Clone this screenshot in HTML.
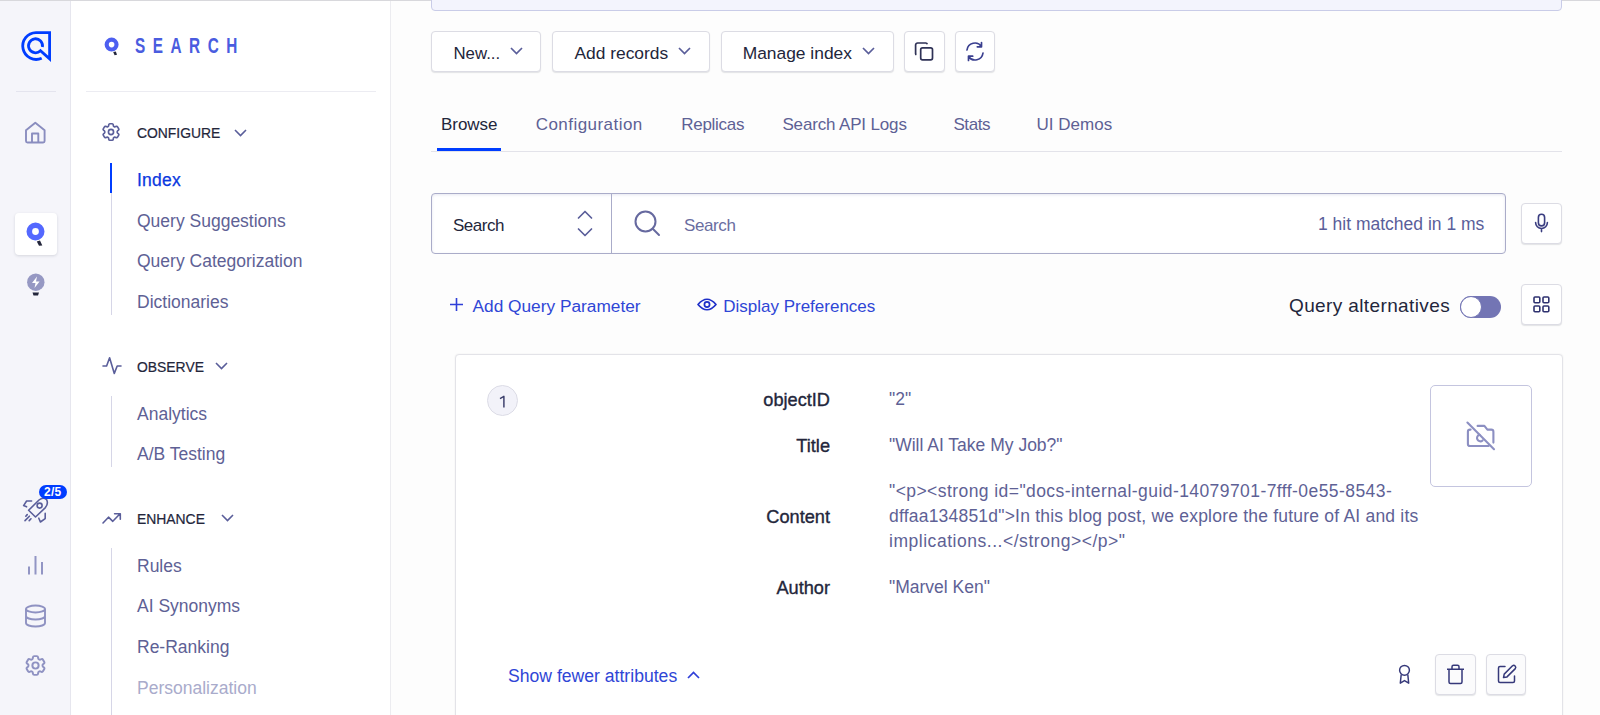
<!DOCTYPE html>
<html><head><meta charset="utf-8">
<style>
*{box-sizing:border-box;margin:0;padding:0}
html,body{width:1600px;height:715px;overflow:hidden;background:#fdfdfd;font-family:"Liberation Sans",sans-serif;color:#23263b}
.a{position:absolute}
.t{position:absolute;line-height:1;white-space:nowrap}
svg{position:absolute;overflow:visible}
#topline{left:0;top:0;width:1600px;height:1px;background:#d8d8dc}
#rail{left:0;top:1px;width:71px;height:714px;background:#f5f5fa;border-right:1px solid #e6e6ee}
#side{left:71px;top:1px;width:320px;height:714px;background:#fff;border-right:1px solid #ececf0}
.nav{font-size:17.5px;color:#5e6195;left:137px}
.hd{font-size:13.9px;color:#23263b;left:137px;-webkit-text-stroke:0.2px #23263b}
.vl{left:110.5px;width:1.5px;background:#d6d6e7}
.btn{position:absolute;background:#fff;border:1px solid #dcdce4;border-radius:4px;box-shadow:0 1px 1px rgba(35,38,59,.12)}
.tab{font-size:17px;color:#5e6195;top:115.8px}
.lbl{font-size:18.2px;color:#23263b;text-align:right;right:770px;-webkit-text-stroke:0.35px #23263b}
.val{font-size:17.5px;color:#5e6195;left:889px}
</style></head><body>
<div id="topline" class="a"></div>
<div id="rail" class="a"></div>
<div id="side" class="a"></div>

<!-- rail -->
<svg style="left:21px;top:31px" width="30" height="30" viewBox="0 0 30 30"><path d="M21.4 16.1 A7 7 0 1 0 19.45 19.75 L28.6 27.9 V1.6 H15 A13.4 13.4 0 1 0 20.7 27.2" fill="none" stroke="#003dff" stroke-width="2.8" stroke-linejoin="miter"/></svg>
<div class="a" style="left:16px;top:91px;width:40px;height:1px;background:#e4e4ee"></div>
<svg style="left:24px;top:121px" width="23" height="23" viewBox="0 0 23 23"><path d="M2 9.3 L11.3 1.8 L20.6 9.3 V20 a1.5 1.5 0 0 1 -1.5 1.5 H3.5 A1.5 1.5 0 0 1 2 20 Z M8 21.5 V12.5 H14.3 V21.5" fill="none" stroke="#8a8dbf" stroke-width="1.9" stroke-linejoin="round"/></svg>
<div class="a" style="left:15px;top:213px;width:42px;height:42px;background:#fff;border-radius:4px;box-shadow:0 1px 3px rgba(35,38,59,.15)"></div>
<svg style="left:26px;top:222px" width="20" height="25" viewBox="0 0 20 25"><circle cx="9.5" cy="9.5" r="6.2" fill="none" stroke="#5468ff" stroke-width="5.6"/><path d="M10.8 19.4 L14 18.6 L16.3 23.4 L13 23.7 Z" fill="#23263b"/></svg>
<svg style="left:26px;top:273px" width="20" height="24" viewBox="0 0 20 24"><circle cx="9.8" cy="9.2" r="8.7" fill="#9698c3"/><path d="M11 3.5 L6 10 H9.5 L8.5 15 L13.6 8.4 H10 Z" fill="#fff"/><path d="M6.5 19.5 H13 L12 22.5 H7.5 Z" fill="#23263b"/></svg>
<svg style="left:15px;top:480px" width="55" height="50" viewBox="0 0 55 50"><g fill="none" stroke="#5a5e9a" stroke-width="1.6" stroke-linecap="round" stroke-linejoin="round"><path d="M20.5 37 L13.6 30.3 L24 20 Q28 16.8 31.6 19.6 Q33.6 23.6 30.4 27.6 Z"/><circle cx="24.6" cy="25.6" r="2.5"/><path d="M16.6 21 H11.6 L8.6 25.6 L11.6 26.8"/><path d="M30.2 33.4 V38.6 L25.4 42 L23.8 38.2"/><path d="M10.8 36.2 L12.2 34.6 M10 40.6 L14.4 36.2 M14.2 40.6 L16 38.8"/></g></svg>
<div class="a" style="left:38.5px;top:484.5px;width:28.5px;height:14px;background:#003dff;border-radius:7px;color:#fff;font-size:12px;font-weight:bold;line-height:14.5px;letter-spacing:0.2px;text-align:center">2/5</div>
<svg style="left:27px;top:555px" width="17" height="20" viewBox="0 0 17 20"><path d="M2 11.6 V19.4 M8.5 1 V19.4 M15 7 V19.4" stroke="#9295c4" stroke-width="2"/></svg>
<svg style="left:24px;top:604px" width="23" height="24" viewBox="0 0 23 24"><g fill="none" stroke="#8f92c2" stroke-width="1.9"><ellipse cx="11.5" cy="5" rx="9.5" ry="3.5"/><path d="M2 5 V19 C2 21 6.2 22.5 11.5 22.5 S21 21 21 19 V5 M2 12 C2 14 6.2 15.5 11.5 15.5 S21 14 21 12"/></g></svg>
<svg style="left:23px;top:653px" width="25" height="25" viewBox="0 0 24 24"><g fill="none" stroke="#8f92c2" stroke-width="1.9" stroke-linejoin="round"><path d="M9.594 3.94c.09-.542.56-.94 1.11-.94h2.593c.55 0 1.02.398 1.11.94l.213 1.281c.063.374.313.686.645.87.074.04.147.083.22.127.325.196.72.257 1.075.124l1.217-.456a1.125 1.125 0 0 1 1.37.49l1.296 2.247a1.125 1.125 0 0 1-.26 1.431l-1.003.827c-.293.241-.438.613-.43.992a7.723 7.723 0 0 1 0 .255c-.008.378.137.75.43.991l1.004.827c.424.35.534.955.26 1.43l-1.298 2.247a1.125 1.125 0 0 1-1.369.491l-1.217-.456c-.355-.133-.75-.072-1.076.124a6.47 6.47 0 0 1-.22.128c-.331.183-.581.495-.644.869l-.213 1.281c-.09.543-.56.94-1.11.94h-2.594c-.55 0-1.019-.398-1.11-.94l-.213-1.281c-.062-.374-.312-.686-.644-.87a6.52 6.52 0 0 1-.22-.127c-.325-.196-.72-.257-1.076-.124l-1.217.456a1.125 1.125 0 0 1-1.369-.49l-1.297-2.247a1.125 1.125 0 0 1 .26-1.431l1.004-.827c.292-.24.437-.613.43-.991a6.932 6.932 0 0 1 0-.255c.007-.38-.138-.751-.43-.992l-1.004-.827a1.125 1.125 0 0 1-.26-1.43l1.297-2.247a1.125 1.125 0 0 1 1.37-.491l1.216.456c.356.133.751.072 1.076-.124.072-.044.146-.086.22-.128.332-.183.582-.495.644-.869l.214-1.28Z"/><circle cx="12" cy="12" r="3"/></g></svg>

<!-- sidebar -->
<svg style="left:104px;top:37px" width="16" height="20" viewBox="0 0 16 20"><circle cx="7.6" cy="7.6" r="4.9" fill="none" stroke="#4d5ff0" stroke-width="4.2"/><path d="M9.2 15 L11.8 14.6 L13 17.8 L10.6 18.2 Z" fill="#23263b"/></svg>
<div class="t" style="left:135px;top:35.4px;font-size:21.6px;color:#4a5cdf;font-weight:bold;letter-spacing:10.6px;transform:scaleX(0.71);transform-origin:0 0">SEARCH</div>
<div class="a" style="left:86px;top:91px;width:290px;height:1px;background:#ececf2"></div>

<svg style="left:100px;top:121px" width="22" height="22" viewBox="0 0 24 24"><g fill="none" stroke="#5a5e9a" stroke-width="1.8" stroke-linejoin="round"><path d="M9.594 3.94c.09-.542.56-.94 1.11-.94h2.593c.55 0 1.02.398 1.11.94l.213 1.281c.063.374.313.686.645.87.074.04.147.083.22.127.325.196.72.257 1.075.124l1.217-.456a1.125 1.125 0 0 1 1.37.49l1.296 2.247a1.125 1.125 0 0 1-.26 1.431l-1.003.827c-.293.241-.438.613-.43.992a7.723 7.723 0 0 1 0 .255c-.008.378.137.75.43.991l1.004.827c.424.35.534.955.26 1.43l-1.298 2.247a1.125 1.125 0 0 1-1.369.491l-1.217-.456c-.355-.133-.75-.072-1.076.124a6.47 6.47 0 0 1-.22.128c-.331.183-.581.495-.644.869l-.213 1.281c-.09.543-.56.94-1.11.94h-2.594c-.55 0-1.019-.398-1.11-.94l-.213-1.281c-.062-.374-.312-.686-.644-.87a6.52 6.52 0 0 1-.22-.127c-.325-.196-.72-.257-1.076-.124l-1.217.456a1.125 1.125 0 0 1-1.369-.49l-1.297-2.247a1.125 1.125 0 0 1 .26-1.431l1.004-.827c.292-.24.437-.613.43-.991a6.932 6.932 0 0 1 0-.255c.007-.38-.138-.751-.43-.992l-1.004-.827a1.125 1.125 0 0 1-.26-1.43l1.297-2.247a1.125 1.125 0 0 1 1.37-.491l1.216.456c.356.133.751.072 1.076-.124.072-.044.146-.086.22-.128.332-.183.582-.495.644-.869l.214-1.28Z"/><circle cx="12" cy="12" r="2.8"/></g></svg>
<div class="t hd" style="top:127.2px">CONFIGURE</div>
<svg style="left:234px;top:129px" width="13" height="8" viewBox="0 0 13 8"><path d="M1 1 L6.5 6.5 L12 1" fill="none" stroke="#5a5e9a" stroke-width="1.6"/></svg>
<div class="a vl" style="top:163px;height:152px"></div>
<div class="a" style="left:110px;top:163px;width:2px;height:30px;background:#003dff"></div>
<div class="t nav" style="top:172.1px;color:#0a38e0;letter-spacing:0.25px;-webkit-text-stroke:0.25px #0a38e0">Index</div>
<div class="t nav" style="top:213.0px">Query Suggestions</div>
<div class="t nav" style="top:253.3px">Query Categorization</div>
<div class="t nav" style="top:293.6px">Dictionaries</div>

<svg style="left:102px;top:357px" width="20" height="17" viewBox="0 0 20 17"><path d="M1 9 H4.6 L7.6 0.8 L12.3 16.4 L15.2 9 H19" fill="none" stroke="#5a5e9a" stroke-width="1.6" stroke-linejoin="round" stroke-linecap="round"/></svg>
<div class="t hd" style="top:360.6px">OBSERVE</div>
<svg style="left:215px;top:362px" width="13" height="8" viewBox="0 0 13 8"><path d="M1 1 L6.5 6.5 L12 1" fill="none" stroke="#5a5e9a" stroke-width="1.6"/></svg>
<div class="a vl" style="top:396px;height:71px"></div>
<div class="t nav" style="top:405.7px">Analytics</div>
<div class="t nav" style="top:445.8px">A/B Testing</div>

<svg style="left:102px;top:511.5px" width="20" height="13" viewBox="0 0 20 13"><path d="M1 11 L6.5 5.2 L10.8 9.3 L17.8 2 M12.6 1.8 H18.3 V7.3" fill="none" stroke="#5a5e9a" stroke-width="1.6" stroke-linejoin="round" stroke-linecap="round"/></svg>
<div class="t hd" style="top:513px">ENHANCE</div>
<svg style="left:221px;top:514px" width="13" height="8" viewBox="0 0 13 8"><path d="M1 1 L6.5 6.5 L12 1" fill="none" stroke="#5a5e9a" stroke-width="1.6"/></svg>
<div class="a vl" style="top:548px;height:167px"></div>
<div class="t nav" style="top:557.9px">Rules</div>
<div class="t nav" style="top:598.2px">AI Synonyms</div>
<div class="t nav" style="top:638.5px">Re-Ranking</div>
<div class="t nav" style="top:679.6px;color:#a9abcb">Personalization</div>

<!-- main -->
<div class="a" style="left:431px;top:-4px;width:1131px;height:15px;background:#f3f4fd;border:1px solid #c9cce8;border-radius:4px"></div>

<div class="btn" style="left:431px;top:31px;width:110px;height:41px"></div>
<div class="t" style="left:453.5px;top:46.4px;font-size:16.8px;color:#23263b">New...</div>
<svg style="left:510px;top:47px" width="13" height="8" viewBox="0 0 13 8"><path d="M1 1 L6.5 6.5 L12 1" fill="none" stroke="#5a5e9a" stroke-width="1.7"/></svg>
<div class="btn" style="left:552px;top:31px;width:158px;height:41px"></div>
<div class="t" style="left:574.4px;top:45.4px;font-size:17.4px;color:#23263b">Add records</div>
<svg style="left:678px;top:47px" width="13" height="8" viewBox="0 0 13 8"><path d="M1 1 L6.5 6.5 L12 1" fill="none" stroke="#5a5e9a" stroke-width="1.7"/></svg>
<div class="btn" style="left:720.5px;top:31px;width:173px;height:41px"></div>
<div class="t" style="left:742.7px;top:45.4px;font-size:17.4px;color:#23263b">Manage index</div>
<svg style="left:861.5px;top:47px" width="13" height="8" viewBox="0 0 13 8"><path d="M1 1 L6.5 6.5 L12 1" fill="none" stroke="#5a5e9a" stroke-width="1.7"/></svg>
<div class="btn" style="left:904px;top:31px;width:41px;height:41px"></div>
<svg style="left:914px;top:41px" width="21" height="21" viewBox="0 0 21 21"><g fill="none" stroke="#2f3256" stroke-width="1.7" stroke-linejoin="round"><rect x="6.7" y="6.8" width="11.8" height="12" rx="1.8"/><path d="M2.4 13.8 A1.4 1.4 0 0 1 1.6 12.6 V4 A2 2 0 0 1 3.6 2 H11.8 A1.6 1.6 0 0 1 13.3 3.2"/></g></svg>
<div class="btn" style="left:955px;top:31px;width:40px;height:41px"></div>
<svg style="left:964px;top:41px" width="22" height="21" viewBox="0 0 22 21"><g fill="none" stroke="#3a3f8f" stroke-width="1.7" stroke-linecap="round" stroke-linejoin="round"><path d="M3 9 A8 8 0 0 1 17.5 5.5 M17.5 1.5 V5.8 H13.3"/><path d="M19 12 A8 8 0 0 1 4.5 15.5 M4.5 19.5 V15.2 H8.7"/></g></svg>

<!-- tabs -->
<div class="t tab" style="left:440.9px;color:#23263b">Browse</div>
<div class="t tab" style="left:535.7px;letter-spacing:0.46px">Configuration</div>
<div class="t tab" style="left:681.3px;letter-spacing:-0.3px">Replicas</div>
<div class="t tab" style="left:782.4px;letter-spacing:-0.15px">Search API Logs</div>
<div class="t tab" style="left:953.4px;letter-spacing:-0.4px">Stats</div>
<div class="t tab" style="left:1036.6px">UI Demos</div>
<div class="a" style="left:431px;top:151px;width:1131px;height:1px;background:#e3e3ea"></div>
<div class="a" style="left:436.5px;top:148px;width:64px;height:3px;background:#003dff"></div>

<!-- search -->
<div class="a" style="left:431px;top:193px;width:1075px;height:61px;background:#fff;border:1px solid #aaacc9;border-radius:4px;box-shadow:inset 0 1px 3px rgba(119,122,175,.18)"></div>
<div class="a" style="left:611px;top:193px;width:1px;height:61px;background:#aaacc9"></div>
<div class="t" style="left:453px;top:216.6px;font-size:17px;letter-spacing:-0.5px;color:#23263b">Search</div>
<svg style="left:577px;top:210px" width="16" height="27" viewBox="0 0 16 27"><path d="M1.5 8 L8 1.5 L14.5 8 M1.5 19 L8 25.5 L14.5 19" fill="none" stroke="#5a5e9a" stroke-width="1.7" stroke-linejoin="round" stroke-linecap="round"/></svg>
<svg style="left:634px;top:210px" width="28" height="27" viewBox="0 0 28 27"><g fill="none" stroke="#66699f" stroke-width="2" stroke-linecap="round"><circle cx="11.5" cy="11.5" r="10"/><path d="M19 19 L25 25"/></g></svg>
<div class="t" style="left:684px;top:216.6px;font-size:17px;letter-spacing:-0.4px;color:#6a6d9f">Search</div>
<div class="t" style="left:1318px;top:215.9px;font-size:17.5px;color:#5a5e9a">1 hit matched in 1 ms</div>
<div class="btn" style="left:1521px;top:203px;width:41px;height:41px"></div>
<svg style="left:1534px;top:213px" width="15" height="20" viewBox="0 0 15 20"><g fill="none" stroke="#3a3d80" stroke-width="1.6" stroke-linecap="round"><rect x="4.4" y="1.3" width="6.2" height="11.6" rx="3.1"/><path d="M1.6 9.6 A5.9 5.9 0 0 0 13.4 9.6 M7.5 15.5 V18.6"/></g></svg>

<!-- params -->
<svg style="left:449px;top:297px" width="15" height="15" viewBox="0 0 15 15"><path d="M7.5 1 V14 M1 7.5 H14" stroke="#2f3fd8" stroke-width="1.6"/></svg>
<div class="t" style="left:472.5px;top:297.6px;font-size:17.3px;color:#2f46d6">Add Query Parameter</div>
<svg style="left:697px;top:297px" width="20" height="15" viewBox="0 0 20 15"><g fill="none" stroke="#1e2fc8" stroke-width="1.7"><path d="M1 7.5 Q10 -3 19 7.5 Q10 18 1 7.5 Z" stroke-linejoin="round"/><circle cx="10" cy="7.5" r="2.6"/></g></svg>
<div class="t" style="left:723.2px;top:297.6px;font-size:17px;color:#2f46d6">Display Preferences</div>
<div class="t" style="left:1289px;top:296.3px;font-size:19px;letter-spacing:0.38px;color:#23263b">Query alternatives</div>
<div class="a" style="left:1460px;top:296px;width:41px;height:22px;background:#7375b4;border-radius:11px"></div>
<div class="a" style="left:1460px;top:296px;width:22px;height:22px;background:#fff;border-radius:50%;border:1.3px solid #7375b4"></div>
<div class="btn" style="left:1521px;top:284px;width:41px;height:41px"></div>
<svg style="left:1533px;top:296px" width="17" height="17" viewBox="0 0 17 17"><g fill="none" stroke="#2f3270" stroke-width="1.6"><rect x="1" y="1" width="5.8" height="5.8" rx="1"/><rect x="10" y="1" width="5.8" height="5.8" rx="1"/><rect x="1" y="10" width="5.8" height="5.8" rx="1"/><rect x="10" y="10" width="5.8" height="5.8" rx="1"/></g></svg>

<!-- card -->
<div class="a" style="left:455px;top:354px;width:1108px;height:400px;background:#fff;border:1px solid #e3e3e8;border-radius:4px;box-shadow:0 0 2px rgba(0,0,0,.07)"></div>
<div class="a" style="left:487px;top:385px;width:31px;height:31px;background:#f2f2f9;border:1px solid #dcdce6;border-radius:50%"></div>
<svg style="left:498px;top:394px" width="10" height="16" viewBox="0 0 10 16"><path d="M2 4.6 L5.9 2.3 V13.6" fill="none" stroke="#3a3d6a" stroke-width="1.45" stroke-linejoin="round"/></svg>

<div class="t lbl" style="top:390.6px">objectID</div>
<div class="t lbl" style="top:436.6px">Title</div>
<div class="t lbl" style="top:508.1px">Content</div>
<div class="t lbl" style="top:578.6px">Author</div>
<div class="t val" style="top:391.2px">"2"</div>
<div class="t val" style="top:437.2px">"Will AI Take My Job?"</div>
<div class="val a" style="top:478.8px;line-height:25px;white-space:nowrap"><span style="letter-spacing:0.43px">"&lt;p&gt;&lt;strong id="docs-internal-guid-14079701-7fff-0e55-8543-</span><br><span style="letter-spacing:0.21px">dffaa134851d"&gt;In this blog post, we explore the future of AI and its</span><br><span style="letter-spacing:0.53px">implications...&lt;/strong&gt;&lt;/p&gt;"</span></div>
<div class="t val" style="top:579.2px">"Marvel Ken"</div>

<div class="a" style="left:1430px;top:385px;width:102px;height:102px;border:1px solid #c4c5df;border-radius:5px;background:#fff"></div>
<svg style="left:1465px;top:420px" width="31" height="31" viewBox="0 0 31 31"><g fill="none" stroke="#8c8fc2" stroke-width="2.1" stroke-linecap="round" stroke-linejoin="round"><path d="M5.6 9.6 H5 A2.1 2.1 0 0 0 2.9 11.7 V23.9 A2.1 2.1 0 0 0 5 26 H23.6"/><path d="M28.4 22.6 V11.7 A2.1 2.1 0 0 0 26.3 9.6 H22.4 L19.4 5.9 H12.6"/><path d="M14.6 14.8 A3.3 3.3 0 1 0 17.6 20.4"/><path d="M2.4 2.6 L29 29.2"/></g></svg>

<div class="t" style="left:508px;top:667.9px;font-size:17.6px;color:#2f46d6">Show fewer attributes</div>
<svg style="left:687px;top:671px" width="13" height="8" viewBox="0 0 13 8"><path d="M1 7 L6.5 1.5 L12 7" fill="none" stroke="#2f3fd8" stroke-width="1.7"/></svg>

<svg style="left:1397px;top:664px" width="15" height="21" viewBox="0 0 15 21"><g fill="none" stroke="#36397a" stroke-width="1.45" stroke-linejoin="round"><circle cx="7.5" cy="6.3" r="4.9"/><path d="M4.2 10.6 L3.3 19.2 L7.5 16.6 L11.7 19.2 L10.8 10.6"/></g></svg>
<div class="btn" style="left:1435px;top:654px;width:41px;height:41px;background:#fbfbfc"></div>
<svg style="left:1446px;top:664px" width="19" height="21" viewBox="0 0 19 21"><g fill="none" stroke="#36397a" stroke-width="1.5" stroke-linejoin="round"><path d="M1 5.3 H18 M6 5 V2.8 A1.5 1.5 0 0 1 7.5 1.3 H11.5 A1.5 1.5 0 0 1 13 2.8 V5"/><path d="M3 5 V18 A1.5 1.5 0 0 0 4.5 19.5 H14.5 A1.5 1.5 0 0 0 16 18 V5"/></g></svg>
<div class="btn" style="left:1486px;top:654px;width:40px;height:41px;background:#fbfbfc"></div>
<svg style="left:1497px;top:664px" width="20" height="20" viewBox="0 0 20 20"><g fill="none" stroke="#36397a" stroke-width="1.5" stroke-linejoin="round" stroke-linecap="round"><path d="M8 2.5 H3 A1.5 1.5 0 0 0 1.5 4 V17 A1.5 1.5 0 0 0 3 18.5 H16 A1.5 1.5 0 0 0 17.5 17 V12"/><path d="M15.5 1.8 A2 2 0 0 1 18.3 4.6 L10 12.9 L6.5 13.6 L7.2 10.1 Z"/></g></svg>
</body></html>
